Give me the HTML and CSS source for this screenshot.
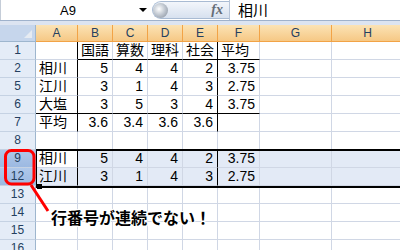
FILE: index.html
```html
<!DOCTYPE html>
<html>

<head>
  <meta charset="utf-8" />
  <link rel="stylesheet" href="styles.css">
</head>

<body>
  <div class="sheet">
    <!-- 名前ボックスと数式バー -->
    <div class="formula-bar">
      <div class="name-box"><span class="name">A9</span><span class="drop"></span></div>
      <div class="fx-box"><span class="knob"></span><span class="fx">fx</span></div>
      <div class="formula">相川</div>
    </div>
    <div class="bar-edge"></div>

    <div class="grid">
      <div class="row head">
        <div class="corner">
          <svg width="35" height="16" viewBox="0 0 35 16"><polygon points="24,13 32,13 32,5" fill="#e6ebf2" /></svg>
        </div>
        <div>A</div><div>B</div><div>C</div><div>D</div><div>E</div><div>F</div><div>G</div><div>H</div>
      </div>
      <div class="row">
        <div class="rh">1</div>
        <div class="br"></div>
        <div class="bb">国語</div><div class="bb">算数</div><div class="bb">理科</div><div class="bb br">社会</div><div class="bb">平均</div>
        <div></div><div></div>
      </div>
      <div class="row">
        <div class="rh">2</div>
        <div class="br">相川</div>
        <div class="num">5</div><div class="num">4</div><div class="num">4</div><div class="num br">2</div><div class="num">3.75</div>
        <div></div><div></div>
      </div>
      <div class="row">
        <div class="rh">5</div>
        <div class="br">江川</div>
        <div class="num">3</div><div class="num">1</div><div class="num">4</div><div class="num br">3</div><div class="num">2.75</div>
        <div></div><div></div>
      </div>
      <div class="row">
        <div class="rh">6</div>
        <div class="br bb">大塩</div>
        <div class="num bb">3</div><div class="num bb">5</div><div class="num bb">3</div><div class="num br bb">4</div><div class="num bb">3.75</div>
        <div></div><div></div>
      </div>
      <div class="row">
        <div class="rh">7</div>
        <div class="br">平均</div>
        <div class="num">3.6</div><div class="num">3.4</div><div class="num">3.6</div><div class="num br">3.6</div><div></div>
        <div></div><div></div>
      </div>
      <div class="row">
        <div class="rh">8</div>
        <div></div><div></div><div></div><div></div><div></div><div></div><div></div><div></div>
      </div>
      <div class="row sel">
        <div class="rh">9</div>
        <div class="br active">相川</div>
        <div class="num">5</div><div class="num">4</div><div class="num">4</div><div class="num br">2</div><div class="num">3.75</div>
        <div></div><div></div>
      </div>
      <div class="row sel">
        <div class="rh">12</div>
        <div class="br">江川</div>
        <div class="num">3</div><div class="num">1</div><div class="num">4</div><div class="num br">3</div><div class="num">2.75</div>
        <div></div><div></div>
      </div>
      <div class="row">
        <div class="rh">13</div>
        <div></div><div></div><div></div><div></div><div></div><div></div><div></div><div></div>
      </div>
      <div class="row">
        <div class="rh">14</div>
        <div></div><div></div><div></div><div></div><div></div><div></div><div></div><div></div>
      </div>
      <div class="row">
        <div class="rh">15</div>
        <div></div><div></div><div></div><div></div><div></div><div></div><div></div><div></div>
      </div>
      <div class="row">
        <div class="rh">16</div>
        <div></div><div></div><div></div><div></div><div></div><div></div><div></div><div></div>
      </div>

      <!-- 選択範囲の枠 -->
      <div class="selection"><span class="handle"></span></div>

      <!-- 吹き出し -->
      <svg class="callout" width="400" height="225" viewBox="0 0 400 225">
        <rect x="5.5" y="125.5" width="28.5" height="33.5" rx="6" fill="none" stroke="#ff0000" stroke-width="3" />
        <line x1="31" y1="160" x2="48" y2="186" stroke="#ff0000" stroke-width="3" />
      </svg>
      <div class="note">行番号が連続でない！</div>
    </div>
  </div>
</body>
</html>
```

FILE: styles.css
```css
body {
  margin: 0;
  padding: 0;
  background-color: #fff;
  font-family: "Liberation Sans", "Noto Sans CJK JP", sans-serif;
  overflow: hidden;
}

.sheet {
  width: 400px;
  height: 250px;
  overflow: hidden;
}

/* 数式バー */
.formula-bar {
  display: flex;
  height: 20px;
  background-color: #fff;
}

.name-box {
  width: 152px;
  display: flex;
  align-items: center;
  border-left: 1px solid #c5cdd8;
  box-sizing: border-box;
}

.name {
  width: 134px;
  text-align: center;
  font-size: 13px;
  padding-top: 1px;
}

.drop {
  width: 0;
  height: 0;
  margin-left: 4px;
  border-left: 4px solid transparent;
  border-right: 4px solid transparent;
  border-top: 4px solid #000;
}

.fx-box {
  width: 77px;
  margin: 1px 0;
  padding-right: 6px;
  display: flex;
  align-items: center;
  box-sizing: border-box;
  border: 1px solid #a9bbd3;
  border-right: none;
  border-radius: 9px 0 0 9px;
  background: linear-gradient(#f3f6fb, #d7e1ef);
}

.knob {
  width: 15px;
  height: 15px;
  margin-right: auto;
  border-radius: 50%;
  background: radial-gradient(circle at 40% 40%, #fff, #c2c9d2 45%, #7f8896);
}

.fx {
  font-family: "Liberation Serif", serif;
  font-style: italic;
  font-weight: bold;
  font-size: 14px;
  color: #656d78;
}

.formula {
  flex: 1;
  padding-left: 8px;
  border-left: 1px solid #b6c4d8;
  font-size: 15px;
  line-height: 21px;
}

.bar-edge {
  height: 5px;
  box-sizing: border-box;
  border-top: 1px solid #9fb2cc;
  background-color: #dce4f1;
}

/* シート */
.grid {
  position: relative;
  height: 225px;
  overflow: hidden;
}

.row {
  display: grid;
  grid-template-columns: 36px 42px 35px 35px 35px 35px 42px 72px 72px;
  width: 404px;
  height: 18px;
}

.row > div {
  box-sizing: border-box;
  padding: 0 2px 0 3px;
  border-right: 1px solid #d0d7e5;
  border-bottom: 1px solid #d0d7e5;
  line-height: 17px;
  font-size: 14px;
  white-space: nowrap;
  overflow: hidden;
}

.row.head {
  height: 17px;
}

.head > div {
  padding: 0;
  line-height: 16px;
  font-size: 12px;
  text-align: center;
  color: #243f60;
  border-color: #f2a346;
  background: linear-gradient(#fbe3b5, #f6c885);
}

.head > .corner {
  border-color: #9eb6ce;
  background: #c6d6ec;
}

.corner svg {
  display: block;
}

.row > .rh {
  padding: 0;
  text-align: center;
  font-size: 12px;
  color: #243f60;
  background-color: #e4ecf7;
  border-right-color: #9eb6ce;
  border-bottom-color: #c5d2e3;
}

.row > .num {
  text-align: right;
  padding-right: 4px;
}

.row > .br {
  border-right-color: #000;
}

.row > .bb {
  border-bottom-color: #000;
}

.row.sel > div {
  background-color: #e3eaf6;
}

.row.sel > .rh {
  background: linear-gradient(#afc8ea, #9cb9e1);
}

.row.sel > .active {
  background-color: #fff;
}

.selection {
  position: absolute;
  left: 36px;
  top: 124px;
  width: 380px;
  height: 39px;
  box-sizing: border-box;
  border: 2px solid #000;
  border-left-width: 1px;
}

.handle {
  position: absolute;
  left: 0;
  top: 33px;
  width: 5px;
  height: 5px;
  background-color: #000;
}

.callout {
  position: absolute;
  left: 0;
  top: 0;
}

.note {
  position: absolute;
  left: 51px;
  top: 184px;
  font-family: "Noto Sans CJK JP", sans-serif;
  font-weight: bold;
  font-size: 16px;
  line-height: 16px;
  color: #000;
  text-shadow: 1px 0 #fff, -1px 0 #fff, 0 1px #fff, 0 -1px #fff, 1px 1px #fff, -1px -1px #fff, 1px -1px #fff, -1px 1px #fff;
}
```
